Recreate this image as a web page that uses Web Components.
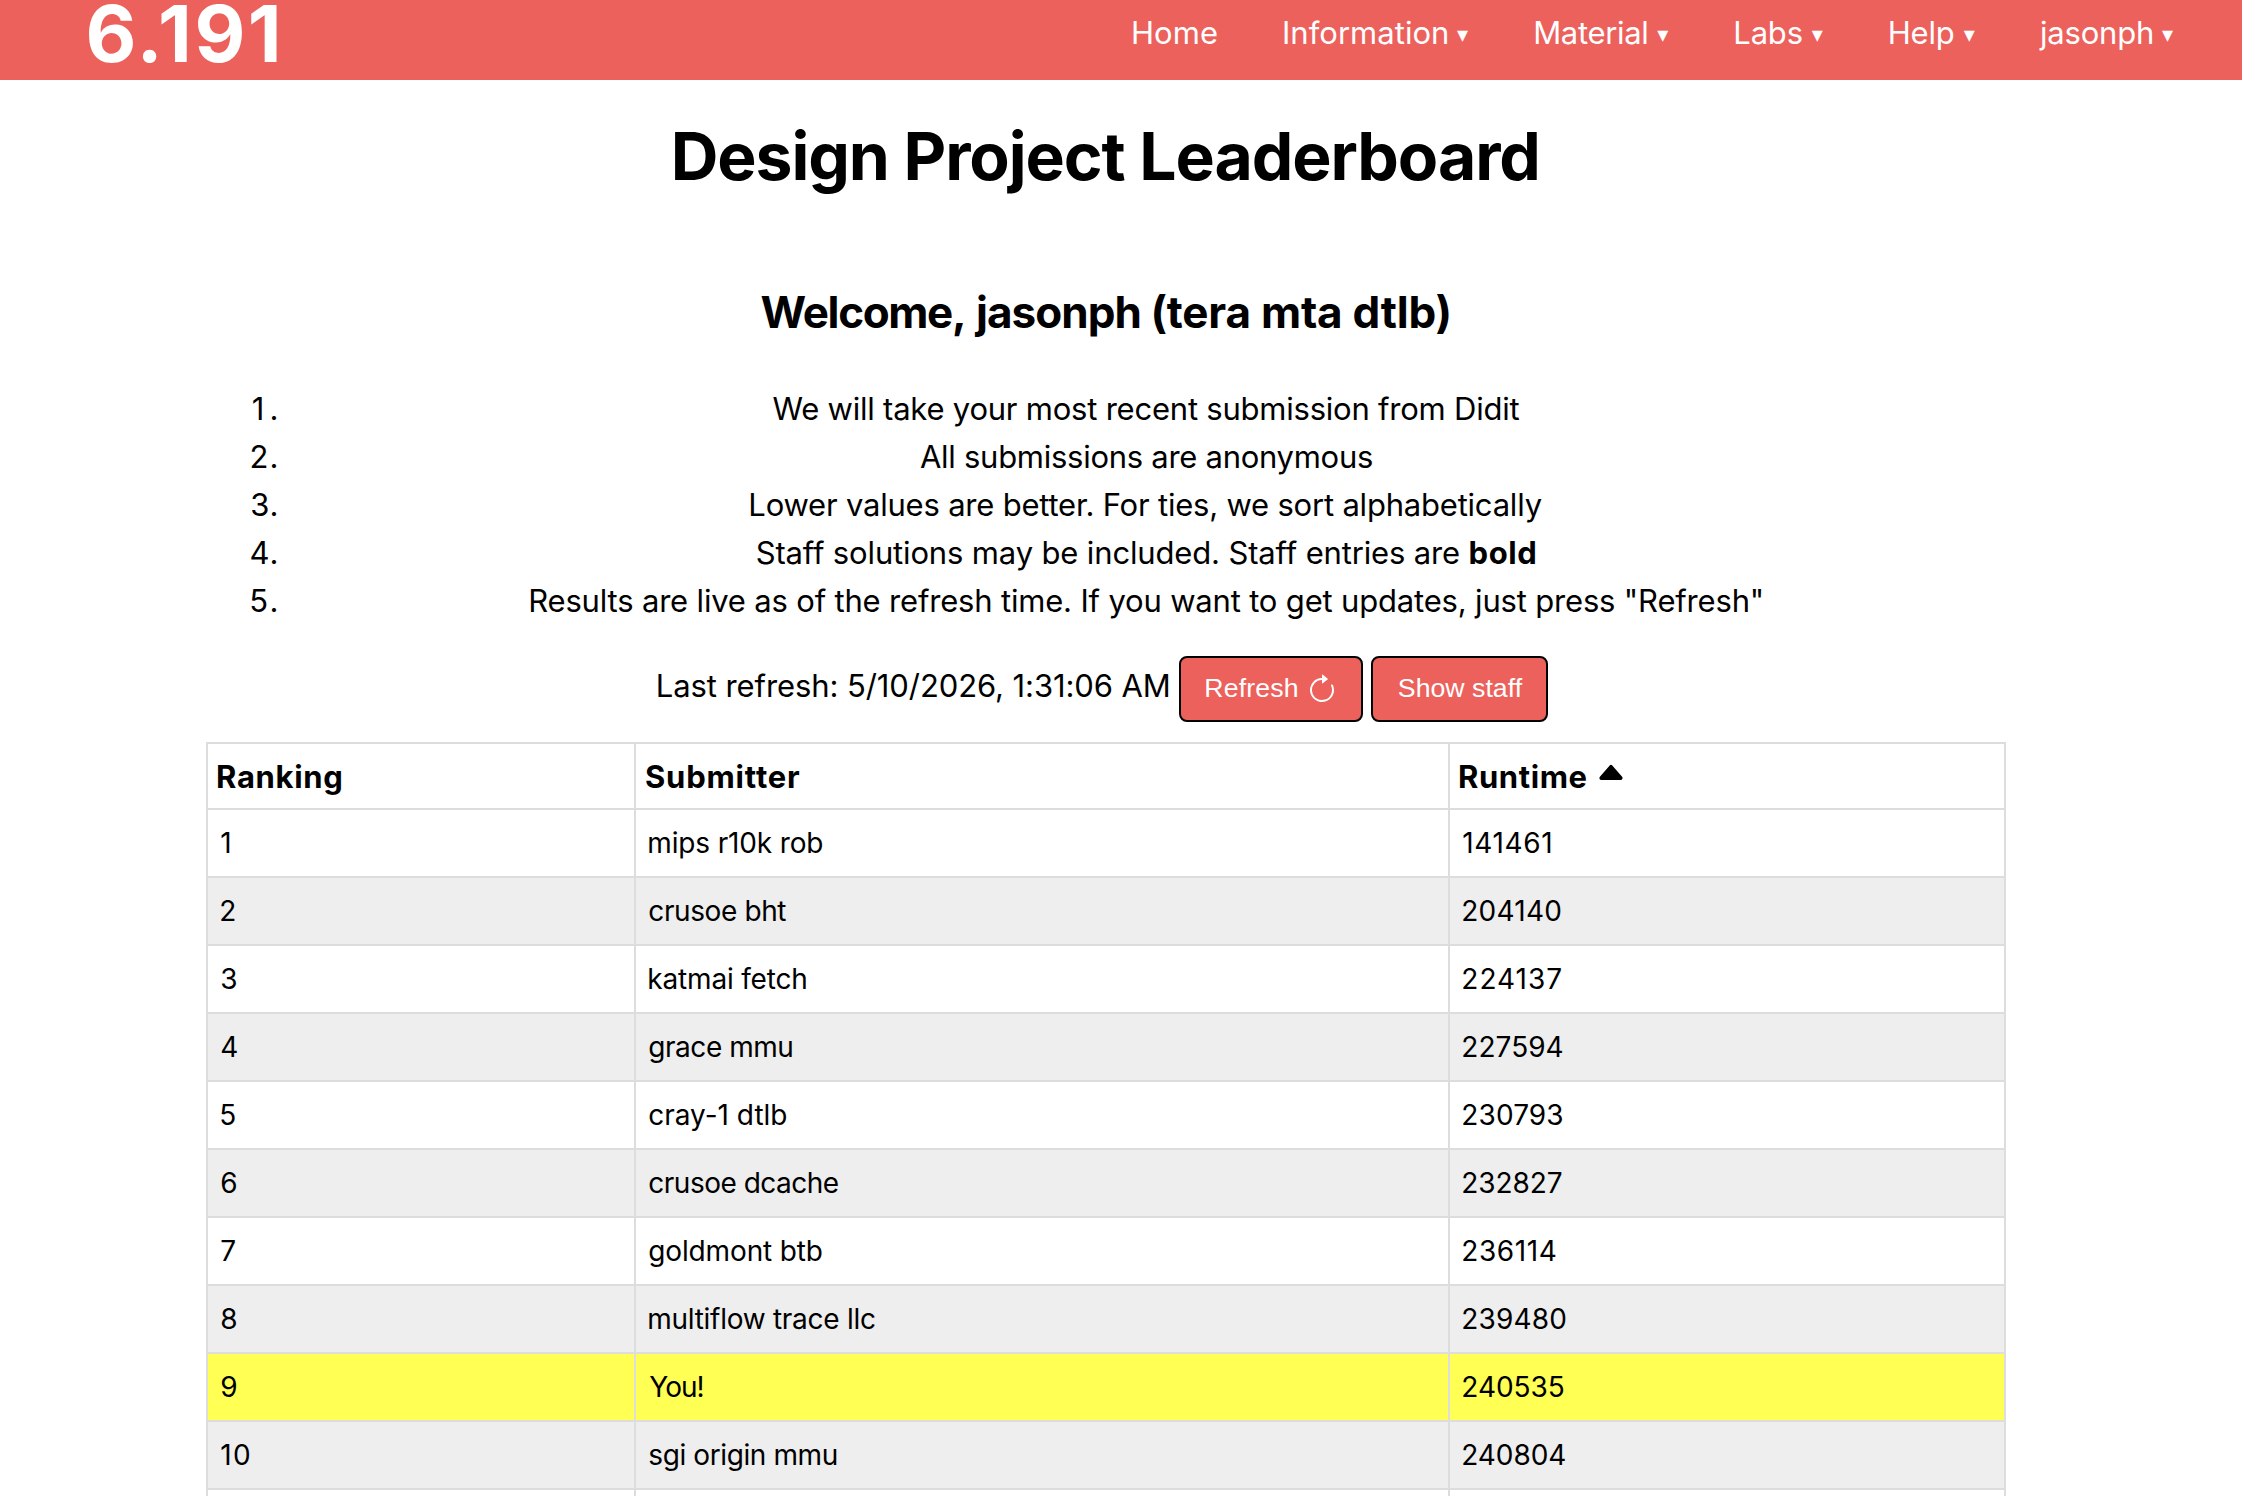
<!DOCTYPE html>
<html lang="en">
<head>
<meta charset="utf-8">
<title>6.191 Design Project Leaderboard</title>
<style>
  html, body {
    margin: 0;
    background: #fff;
  }
  body {
    height: 1496px;
    overflow: hidden;
    color: #000;
    font-family: Inter, "Liberation Sans", sans-serif;
    font-size: 31px;
  }
</style>
</head>
<body>

<course-nav>
  <ink-text slot="brand" width="188.4">6.191</ink-text>
  <nav-item><ink-text width="84">Home</ink-text></nav-item>
  <nav-item menu><ink-text width="163.2">Information</ink-text></nav-item>
  <nav-item menu><ink-text width="112.2">Material</ink-text></nav-item>
  <nav-item menu><ink-text width="66.3">Labs</ink-text></nav-item>
  <nav-item menu><ink-text width="64.1">Help</ink-text></nav-item>
  <nav-item menu><ink-text width="113">jasonph</ink-text></nav-item>
</course-nav>

<leaderboard-page>
  <ink-text slot="title" width="862.7">Design Project Leaderboard</ink-text>
  <span slot="welcome">
    <ink-text width="201.4">Welcome,</ink-text>
    <ink-text width="165.5" style="padding: 0 14px 0 11px">jasonph</ink-text>
    <ink-text width="294.9">(tera mta dtlb)</ink-text>
  </span>

  <rule-item>
    <ink-text slot="number" width="23.8">1.</ink-text>
    <ink-text width="747">We will take your most recent submission from Didit</ink-text>
  </rule-item>
  <rule-item>
    <ink-text slot="number" width="25">2.</ink-text>
    <ink-text width="452">All submissions are anonymous</ink-text>
  </rule-item>
  <rule-item>
    <ink-text slot="number" width="25.3">3.</ink-text>
    <ink-text width="791.3">Lower values are better. For ties, we sort alphabetically</ink-text>
  </rule-item>
  <rule-item>
    <ink-text slot="number" width="26">4.</ink-text>
    <ink-text width="702.4">Staff solutions may be included. Staff entries are</ink-text>
    <ink-text width="65.8" style="font-weight: 700">bold</ink-text>
  </rule-item>
  <rule-item>
    <ink-text slot="number" width="25.3">5.</ink-text>
    <ink-text width="1231.6">Results are live as of the refresh time. If you want to get updates, just press "Refresh"</ink-text>
  </rule-item>

  <ink-text slot="controls" width="511">Last refresh: 5/10/2026, 1:31:06 AM</ink-text>
  <action-button slot="controls" icon="refresh"><ink-text width="91.3">Refresh</ink-text></action-button>
  <action-button slot="controls"><ink-text width="123.8">Show staff</ink-text></action-button>

  <leader-table slot="table"></leader-table>
</leaderboard-page>

<script>
// Text whose letter spacing is set so that its ink is exactly `width` wide.
// Side bearings are trimmed off, so the box starts and ends at the ink.
class InkText extends HTMLElement {
  connectedCallback() {
    if (!this.shadowRoot) {
      this.attachShadow({ mode: "open" });
      this.shadowRoot.innerHTML = `
        <style>
          :host {
            display: inline-block;
            white-space: nowrap;
            flex: none;
          }
        </style>
        <slot></slot>
      `;
    }
    this.fit();
  }

  fit() {
    const target = parseFloat(this.getAttribute("width"));
    const text = this.textContent;
    const style = getComputedStyle(this);
    const ctx = InkText.ctx;
    ctx.font = `${style.fontWeight} ${style.fontSize} ${style.fontFamily}`;
    const m = ctx.measureText(text);
    const ink = m.actualBoundingBoxLeft + m.actualBoundingBoxRight;
    let spacing = 0;
    if (!isNaN(target) && text.length > 1) {
      spacing = (target - ink) / (text.length - 1);
    }
    this.style.letterSpacing = `${spacing}px`;
    this.style.marginLeft = `${m.actualBoundingBoxLeft}px`;
    this.style.marginRight = `${m.actualBoundingBoxRight - m.width - spacing}px`;
  }
}
InkText.ctx = document.createElement("canvas").getContext("2d");

class CourseNav extends HTMLElement {
  constructor() {
    super();
    this.attachShadow({ mode: "open" });
    this.shadowRoot.innerHTML = `
      <style>
        :host {
          display: flex;
          justify-content: space-between;
          align-items: flex-start;
          box-sizing: border-box;
          height: 80px;
          padding: 0 69px 0 88.4px;
          background: #ec615c;
          color: #fff;
        }
        .brand {
          font-size: 78.4px;
          font-weight: 700;
          line-height: 67px;
        }
        nav {
          display: flex;
          gap: 67px;
          line-height: 65.4px;
        }
        ::slotted(nav-item:last-child) {
          margin-left: -2.8px;
        }
      </style>
      <div class="brand"><slot name="brand"></slot></div>
      <nav><slot></slot></nav>
    `;
  }
}

class NavItem extends HTMLElement {
  constructor() {
    super();
    this.attachShadow({ mode: "open" });
  }
  connectedCallback() {
    const arrow = this.hasAttribute("menu") ? `<span class="arrow">▾</span>` : "";
    this.shadowRoot.innerHTML = `
      <style>
        :host {
          display: flex;
          gap: 10px;
        }
        .arrow {
          display: flex;
          justify-content: center;
          width: 11px;
          font-family: "DejaVu Sans", sans-serif;
          font-size: 22px;
          line-height: 69px;
        }
      </style>
      <slot></slot>${arrow}
    `;
  }
}

class LeaderboardPage extends HTMLElement {
  constructor() {
    super();
    this.attachShadow({ mode: "open" });
    this.shadowRoot.innerHTML = `
      <style>
        :host {
          display: block;
          width: 1800px;
          margin: 0 auto 0 206px;
          text-align: center;
        }
        h1 {
          margin: 36px 0 0;
          font-size: 66px;
          line-height: 80px;
        }
        h2 {
          margin: 88px 0 0;
          padding-right: 2px;
          font-size: 44px;
          line-height: 56px;
        }
        h2 ::slotted(span) {
          display: flex;
          justify-content: center;
        }
        .rules {
          margin-top: 45px;
        }
        .controls {
          display: flex;
          justify-content: center;
          gap: 8px;
          height: 66px;
          margin-top: 31px;
          padding-right: 6px;
          line-height: 59.6px;
        }
        .table {
          margin-top: 20px;
          text-align: left;
        }
      </style>
      <h1><slot name="title"></slot></h1>
      <h2><slot name="welcome"></slot></h2>
      <div class="rules"><slot></slot></div>
      <div class="controls"><slot name="controls"></slot></div>
      <div class="table"><slot name="table"></slot></div>
    `;
  }
}

class RuleItem extends HTMLElement {
  constructor() {
    super();
    this.attachShadow({ mode: "open" });
    this.shadowRoot.innerHTML = `
      <style>
        :host {
          display: grid;
          grid-template-columns: 80px 1fr;
          height: 48px;
          line-height: 48px;
        }
        .number {
          display: flex;
          justify-content: flex-end;
          padding-right: 9.5px;
        }
        .text {
          display: flex;
          justify-content: center;
          gap: 10.4px;
        }
      </style>
      <div class="number"><slot name="number"></slot></div>
      <div class="text"><slot></slot></div>
    `;
  }
}

class ActionButton extends HTMLElement {
  constructor() {
    super();
    this.attachShadow({ mode: "open" });
  }
  connectedCallback() {
    let icon = "";
    if (this.getAttribute("icon") == "refresh") {
      icon = `
        <svg width="32" height="32" viewBox="0 0 16 16" fill="currentColor">
          <path d="M8 3a5 5 0 1 0 4.546 2.914.5.5 0 0 1 .908-.417A6 6 0 1 1 8 2z"/>
          <path d="M8 4.466V.534a.25.25 0 0 1 .41-.192l2.36 1.966c.12.1.12.284 0 .384L8.41 4.658A.25.25 0 0 1 8 4.466"/>
        </svg>
      `;
    }
    this.shadowRoot.innerHTML = `
      <style>
        :host {
          display: block;
          font-family: "Liberation Sans", Arial, sans-serif;
          font-size: 26.67px;
        }
        :host([icon]) {
          margin-left: 2px;
        }
        button {
          display: flex;
          align-items: flex-start;
          gap: 8.2px;
          box-sizing: border-box;
          height: 66px;
          margin: 0;
          padding: 0 23.5px 0 25.5px;
          border: 2px solid #000;
          border-radius: 8px;
          background: #ec615c;
          color: #fff;
          font: inherit;
          line-height: 61.5px;
        }
        svg {
          flex: none;
          margin-top: 16px;
        }
      </style>
      <button type="button"><slot></slot>${icon}</button>
    `;
  }
}

class LeaderTable extends HTMLElement {
  constructor() {
    super();
    this.attachShadow({ mode: "open" });
    // rank, submitter, runtime, each with its text width
    this.rows = [
      ["1", 9, "mips r10k rob", 173, "141461", 87],
      ["2", 14, "crusoe bht", 137, "204140", 97],
      ["3", 15, "katmai fetch", 157, "224137", 98],
      ["4", 16, "grace mmu", 143, "227594", 99.3],
      ["5", 15, "cray-1 dtlb", 137, "230793", 99],
      ["6", 15, "crusoe dcache", 188.5, "232827", 98.5],
      ["7", 14, "goldmont btb", 172.5, "236114", 92.5],
      ["8", 15, "multiflow trace llc", 225.6, "239480", 102],
      ["9", 15, "You!", 53.2, "240535", 100.5],
      ["10", 27.7, "sgi origin mmu", 187.4, "240804", 102],
      ["11", 18, "", 0, "", 0],
    ];
  }
  connectedCallback() {
    const body = this.rows.map((row) => this.renderRow(row)).join("");
    this.shadowRoot.innerHTML = `
      <style>
        :host {
          display: block;
          box-sizing: border-box;
          border: 2px solid #ddd;
          border-bottom: 0;
        }
        .row {
          display: grid;
          grid-template-columns: 428px 814px 1fr;
          height: 66px;
          border-bottom: 2px solid #ddd;
          font-size: 28px;
          line-height: 66px;
        }
        .row:nth-child(odd) {
          background: #eee;
        }
        .row.head {
          height: 64px;
          background: #fff;
          font-size: 31px;
          font-weight: 700;
          line-height: 65.4px;
        }
        .row.you {
          background: #ffff54;
        }
        .row > div {
          display: flex;
          padding-left: 13.3px;
          border-right: 2px solid #ddd;
        }
        .row > div:last-child {
          border-right: 0;
        }
        .head > div {
          padding-left: 10px;
        }
        svg {
          flex: none;
          margin: 12px 0 0 8.5px;
        }
      </style>
      <section>
        <div class="row head">
          <div><ink-text width="123.3">Ranking</ink-text></div>
          <div><ink-text width="154">Submitter</ink-text></div>
          <div>
            <ink-text width="126.5">Runtime</ink-text>
            <svg width="32" height="32" viewBox="0 0 16 16" fill="currentColor">
              <path d="m7.247 4.86-4.796 5.481c-.566.647-.106 1.659.753 1.659h9.592a1 1 0 0 0 .753-1.659l-4.796-5.48a1 1 0 0 0-1.506 0z"/>
            </svg>
          </div>
        </div>
        ${body}
      </section>
    `;
  }
  renderRow([rank, rankWidth, name, nameWidth, runtime, runtimeWidth]) {
    if (!name) {
      return `<div class="row"><div></div><div></div><div></div></div>`;
    }
    return `
      <div class="row${name == "You!" ? " you" : ""}">
        <div><ink-text width="${rankWidth}">${rank}</ink-text></div>
        <div><ink-text width="${nameWidth}">${name}</ink-text></div>
        <div><ink-text width="${runtimeWidth}">${runtime}</ink-text></div>
      </div>
    `;
  }
}

// containers first, so the text inherits its font before it is measured
customElements.define("course-nav", CourseNav);
customElements.define("nav-item", NavItem);
customElements.define("leaderboard-page", LeaderboardPage);
customElements.define("rule-item", RuleItem);
customElements.define("action-button", ActionButton);
customElements.define("leader-table", LeaderTable);
customElements.define("ink-text", InkText);
</script>
</body>
</html>
